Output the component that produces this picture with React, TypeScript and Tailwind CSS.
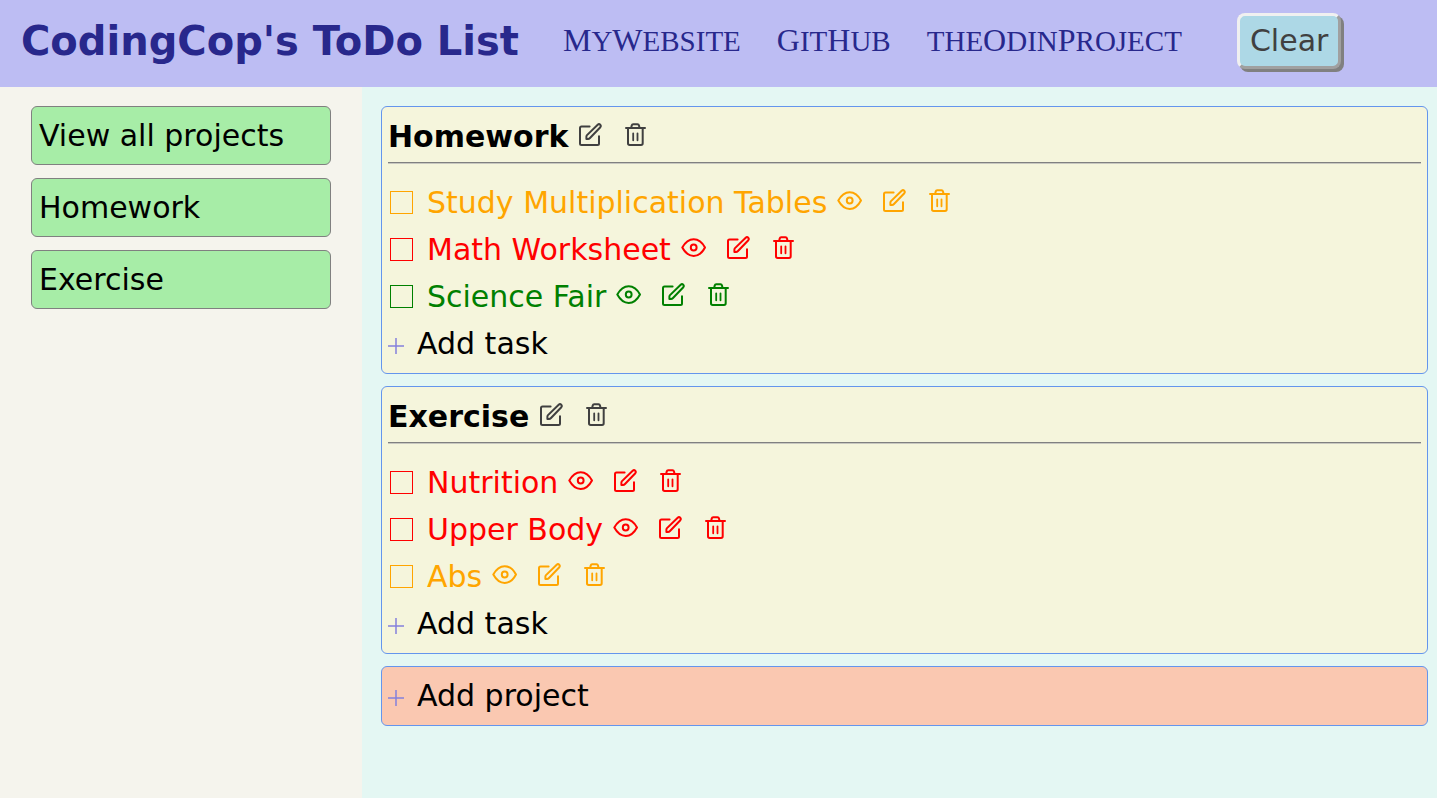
import React from "react";

type Tone = "high" | "medium" | "low";

interface Task {
  name: string;
  tone: Tone;
}

interface Project {
  name: string;
  tasks: Task[];
}

const projects: Project[] = [
  {
    name: "Homework",
    tasks: [
      { name: "Study Multiplication Tables", tone: "medium" },
      { name: "Math Worksheet", tone: "high" },
      { name: "Science Fair", tone: "low" },
    ],
  },
  {
    name: "Exercise",
    tasks: [
      { name: "Nutrition", tone: "high" },
      { name: "Upper Body", tone: "high" },
      { name: "Abs", tone: "medium" },
    ],
  },
];

const toneClass: Record<Tone, string> = {
  high: "text-[#ff0000]",
  medium: "text-[#ffa500]",
  low: "text-[#008000]",
};

const links = [
  { label: "MyWebsite", href: "#website" },
  { label: "GitHub", href: "#github" },
  { label: "theOdinProject", href: "#odin" },
];

function Icon({ children }: { children: React.ReactNode }) {
  return (
    <svg
      viewBox="0 0 25 25"
      className="size-[25px]"
      fill="none"
      stroke="currentColor"
      strokeWidth="2"
      strokeLinecap="round"
      strokeLinejoin="round"
      aria-hidden="true"
    >
      {children}
    </svg>
  );
}

function EyeIcon() {
  return (
    <Icon>
      <path d="M1.300 12.500C4.300 7 8.200 4.200 12.700 4.200S21.100 7 24 12.500C21.100 18 17.200 20.900 12.700 20.900S4.300 18 1.300 12.500Z" />
      <circle cx="12.700" cy="12.500" r="2.900" />
    </Icon>
  );
}

function EditIcon() {
  return (
    <Icon>
      <path d="M11.600 4.500H3.500Q2 4.500 2 6V21.500Q2 23 3.500 23H19.500Q21 23 21 21.500V14.300" />
      <path d="M8.400 16.900V14.600Q8.400 13.700 9 13.100L19.700 2.700Q21 1.500 22.300 2.700Q23.500 4 22.300 5.300L12 16Q11.100 16.900 10 16.900Z" />
    </Icon>
  );
}

function TrashIcon() {
  return (
    <Icon>
      <path d="M3 6H22M5 6V21.300Q5 23 6.700 23H18Q19.700 23 19.700 21.300V6" />
      <path d="M8.200 5.700L8.700 3.500Q9 2.300 10.200 2.300H14.500Q15.700 2.300 16 3.500L16.500 5.700" />
      <path d="M10.200 11.300V18.300M14.500 11.300V18.300" strokeWidth="1.800" />
    </Icon>
  );
}

function Plus() {
  return (
    <svg
      viewBox="0 0 16 16"
      className="mt-[5px] size-4 text-[#8480dc]"
      stroke="currentColor"
      strokeWidth="1.500"
      aria-hidden="true"
    >
      <path d="M0 8H16M8 0V16" />
    </svg>
  );
}

function Actions({ name, view }: { name: string; view?: boolean }) {
  return (
    <div className="ml-2.5 flex gap-5 pb-1">
      {view && (
        <button type="button" aria-label={`View ${name}`}>
          <EyeIcon />
        </button>
      )}
      <button type="button" aria-label={`Edit ${name}`}>
        <EditIcon />
      </button>
      <button type="button" aria-label={`Delete ${name}`}>
        <TrashIcon />
      </button>
    </div>
  );
}

function TaskRow({ task }: { task: Task }) {
  return (
    <li className={`flex h-[47px] items-center ${toneClass[task.tone]}`}>
      <label className="flex items-center">
        <input
          type="checkbox"
          className="mr-3.5 ml-0.5 size-[23px] appearance-none border border-current checked:bg-current"
        />
        {task.name}
      </label>
      <Actions name={task.name} view />
    </li>
  );
}

function ProjectCard({ project }: { project: Project }) {
  return (
    <section className="rounded-md border border-[#6495ed] bg-[#f5f5dc] p-1.5">
      <div className="flex h-[47px] items-center">
        <h2 className="font-bold">{project.name}</h2>
        <div className="text-[#404040]">
          <Actions name={project.name} />
        </div>
      </div>
      <hr className="mt-0.5 mb-[15px] h-0.5 border-t border-b border-t-[#808080] border-b-[#c8c8c0]" />
      <ul>
        {project.tasks.map((task) => (
          <TaskRow key={task.name} task={task} />
        ))}
      </ul>
      <button type="button" className="flex h-[47px] items-center gap-[13px]">
        <Plus />
        Add task
      </button>
    </section>
  );
}

function NavLink({ label, href }: { label: string; href: string }) {
  return (
    <a href={href} className="font-['Liberation_Serif',serif] text-[29px] leading-9 uppercase">
      {label.split(/([A-Z])/).map((part, i) =>
        /^[A-Z]$/.test(part) ? (
          <span key={i} className="text-[32px]">
            {part}
          </span>
        ) : (
          part
        ),
      )}
    </a>
  );
}

export default function App() {
  return (
    <div className="flex min-h-screen flex-col font-['DejaVu_Sans',sans-serif] text-[30px] leading-[35px] text-black">
      <header className="flex items-center gap-11 bg-[#bdbdf3] pt-[13px] pr-5 pb-[18px] pl-[21px] text-[#28288c]">
        <h1 className="text-[40px] leading-[44px] font-bold whitespace-nowrap">CodingCop's ToDo List</h1>
        <nav className="flex gap-9 pb-0.5">
          {links.map((link) => (
            <NavLink key={link.label} label={link.label} href={link.href} />
          ))}
        </nav>
        <button
          type="button"
          className="ml-[11px] rounded-lg border-3 border-t-[#f0f0f0] border-r-[#a0a0a0] border-b-[#a0a0a0] border-l-[#f0f0f0] bg-[#add8e6] px-2.5 pt-[7px] pb-2 text-[#404040] shadow-[3px_3px_0_#808080]"
        >
          Clear
        </button>
      </header>
      <div className="flex flex-1">
        <aside className="w-[362px] shrink-0 bg-[#f5f4ed] px-[31px] pt-[19px]">
          <div className="flex flex-col gap-[13px]">
            {["View all projects", ...projects.map((p) => p.name)].map((name) => (
              <button
                key={name}
                type="button"
                className="rounded-md border border-[#808080] bg-[#a7eda7] px-[7px] py-[11px] text-left"
              >
                {name}
              </button>
            ))}
          </div>
        </aside>
        <main className="flex flex-1 flex-col gap-3 bg-[#e4f7f3] pt-[19px] pr-[9px] pb-5 pl-[19px]">
          {projects.map((project) => (
            <ProjectCard key={project.name} project={project} />
          ))}
          <button
            type="button"
            className="flex items-center gap-[13px] rounded-md border border-[#6495ed] bg-[#fac8b1] px-1.5 pt-[11px] pb-3"
          >
            <Plus />
            Add project
          </button>
        </main>
      </div>
    </div>
  );
}
